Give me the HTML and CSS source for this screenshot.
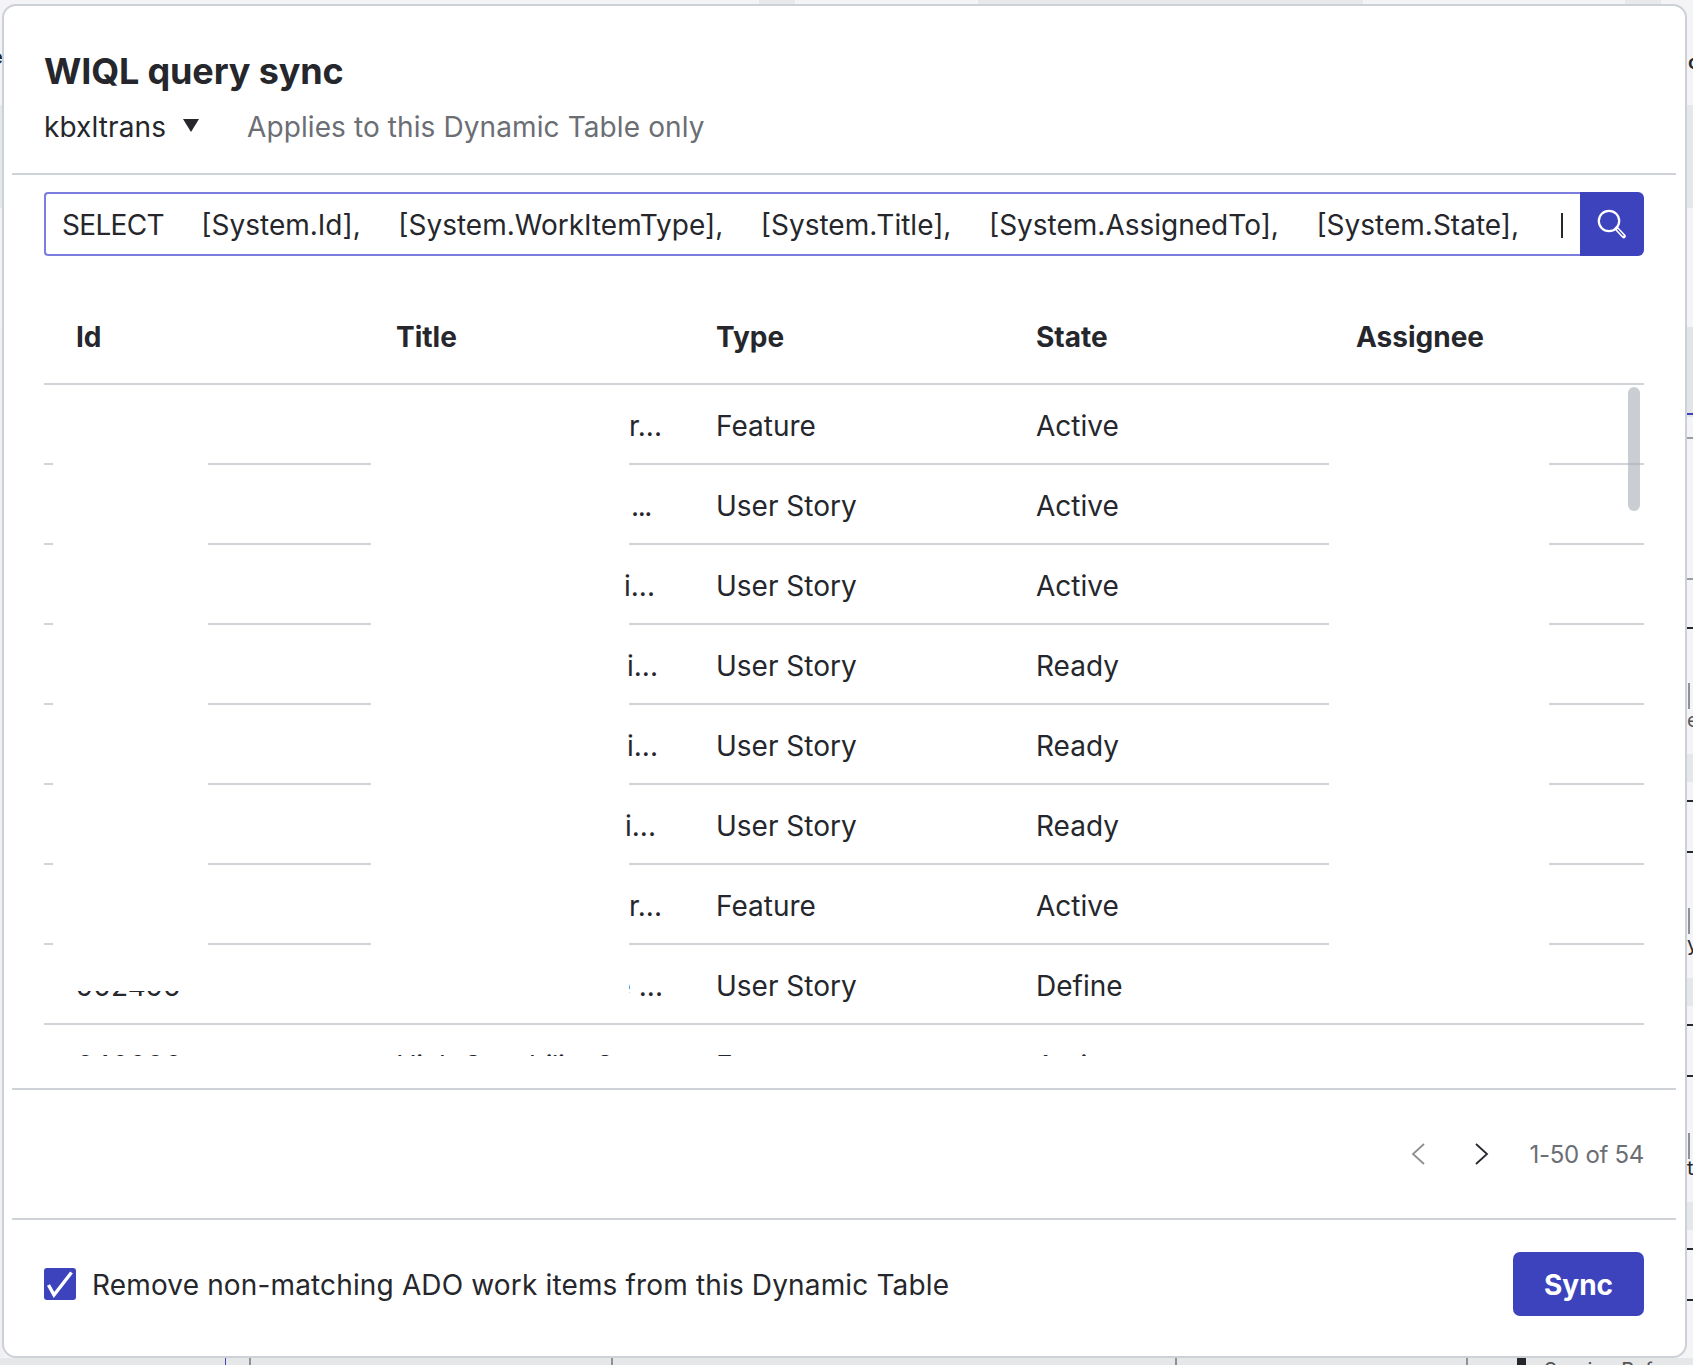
FILE: index.html
```html
<!DOCTYPE html>
<html lang="en">
<head>
<meta charset="utf-8">
<title>WIQL query sync</title>
<link rel="stylesheet" href="styles.css">
</head>
<body>
<div class="backdrop" aria-hidden="true">
  <i class="bd top-a"></i><i class="bd top-b"></i><i class="bd top-c"></i>
  <i class="bd right-band-a"></i><i class="bd right-band-b"></i>
  <i class="bd left-band-a"></i><i class="bd left-band-b"></i>
  <i class="bd tick t1"></i><i class="bd tick t2"></i><i class="bd tick t3"></i><i class="bd tick t4"></i><i class="bd tick t5"></i><i class="bd tick t6"></i><i class="bd tick t7"></i>
  <i class="bd blue-tick"></i><i class="bd grey-tick g1"></i><i class="bd grey-tick g2"></i>
  <i class="bd vbar v1"></i><i class="bd vbar v2"></i><i class="bd vbar v3"></i>
  <i class="bd chip c1"></i><i class="bd chip c2"></i><i class="bd chip c3"></i>
  <i class="bd bottom-band"></i>
  <i class="bd btick b1"></i><i class="bd btick b2"></i><i class="bd btick b3"></i><i class="bd btick b4"></i><i class="bd btick b5"></i><i class="bd btick b6"></i>
  <span class="bd-text bt">Service Ref</span>
  <span class="edge-letter l1">e</span>
  <span class="edge-letter l2">c</span>
  <span class="edge-letter l3">e</span>
  <span class="edge-letter l4">y</span>
  <span class="edge-letter l5">t</span>
</div>

<main class="modal">
  <header class="modal-head">
    <h1 class="modal-title">WIQL query sync</h1>
    <div class="modal-sub">
      <span class="project">kbxltrans</span>
      <svg class="caret-down" viewBox="0 0 16 13" width="16" height="13"><path d="M0 0h16L8 13z"/></svg>
      <span class="scope">Applies to this Dynamic Table only</span>
    </div>
  </header>

  <section class="modal-main">
    <div class="search">
      <div class="query"><span class="query-text"><span class="kw">SELECT</span>    [System.Id],    [System.WorkItemType],    [System.Title],    [System.AssignedTo],    [System.State],</span><span class="text-caret"></span></div>
      <button class="search-btn" aria-label="Search">
        <svg viewBox="0 0 32 32" width="32" height="32" fill="none" stroke="#fff">
          <circle cx="13" cy="13" r="10.2" stroke-width="2.2"/>
          <path d="M20.6 20.6l7.2 7.6" stroke-width="4.2" stroke-linecap="round"/>
          <path d="M21.6 21.6l5.4 5.7" stroke="#3d43bd" stroke-width="1.2" stroke-linecap="round"/>
        </svg>
      </button>
    </div>

    <div class="table">
      <div class="row head"><div>Id</div><div>Title</div><div>Type</div><div>State</div><div>Assignee</div></div>
      <div class="table-body">
        <div class="row"><div></div><div class="t over">r...</div><div>Feature</div><div>Active</div><div></div></div>
        <div class="row"><div></div><div class="t over end-33">...</div><div>User Story</div><div>Active</div><div></div></div>
        <div class="row"><div></div><div class="t over end-29">i...</div><div>User Story</div><div>Active</div><div></div></div>
        <div class="row"><div></div><div class="t over end-26">i...</div><div>User Story</div><div>Ready</div><div></div></div>
        <div class="row"><div></div><div class="t over end-26">i...</div><div>User Story</div><div>Ready</div><div></div></div>
        <div class="row"><div></div><div class="t over end-28">i...</div><div>User Story</div><div>Ready</div><div></div></div>
        <div class="row"><div></div><div class="t over">r...</div><div>Feature</div><div>Active</div><div></div></div>
        <div class="row"><div>902496</div><div class="t end-21">se ...</div><div>User Story</div><div>Define</div><div></div></div>
        <div class="row"><div>640096</div><div class="title-long">High Capability Sup</div><div>Feature</div><div>Active</div><div></div></div>
        <div class="mask m-id"></div>
        <div class="mask m-title"></div>
        <div class="mask m-assignee"></div>
        <div class="thumb"></div>
      </div>
    </div>
  </section>

  <section class="pager">
    <svg class="chev prev" viewBox="0 0 14 22" width="14" height="22" fill="none"><path d="M13 1L2 11l11 10" stroke-width="1.8"/></svg>
    <svg class="chev next" viewBox="0 0 14 22" width="14" height="22" fill="none"><path d="M1 1l11 10L1 21" stroke-width="1.8"/></svg>
    <span class="count">1-50 of 54</span>
  </section>

  <footer class="modal-foot">
    <label class="check">
      <span class="box"><svg viewBox="0 0 32 32" width="32" height="32" fill="none"><path d="M4.5 17l5.5 10L27.5 4.5" stroke="#fff" stroke-width="3.4"/></svg></span>
      <span class="check-label">Remove non-matching ADO work items from this Dynamic Table</span>
    </label>
    <button class="sync">Sync</button>
  </footer>
</main>
</body>
</html>
```

FILE: styles.css
```css
* { box-sizing: border-box; }
html, body { margin: 0; height: 100%; }
body {
  width: 1693px;
  height: 1365px;
  overflow: hidden;
  position: relative;
  background: #f4f4f6;
  font-family: Inter, "Noto Sans", sans-serif;
  color: #25272c;
}

/* page behind the dialog */
.backdrop { position: absolute; inset: 0; overflow: hidden; }
.bd { position: absolute; display: block; }
.top-a, .top-b, .top-c { top: 0; height: 5px; background: #e8e9eb; }
.top-a { left: 759px; width: 36px; }
.top-b { left: 978px; width: 385px; }
.top-c { left: 1625px; width: 36px; }
.right-band-a { left: 1685px; top: 105px; width: 8px; height: 103px; background: #e6e7e9; }
.right-band-b { left: 1685px; top: 327px; width: 8px; height: 90px; background: #e3e4e6; }
.left-band-a { left: 0; top: 105px; width: 4px; height: 103px; background: #e6e7e9; }
.left-band-b { left: 0; top: 327px; width: 4px; height: 1030px; background: #f0f0f2; }
.tick { left: 1687px; width: 6px; height: 2px; background: #25272c; }
.t1 { top: 627px; } .t2 { top: 800px; } .t3 { top: 851px; } .t4 { top: 1024px; } .t5 { top: 1075px; }
.t6 { top: 1248px; } .t7 { top: 1299px; }
.blue-tick { left: 1687px; top: 413px; width: 6px; height: 2px; background: #3d43bd; }
.grey-tick { left: 1687px; width: 6px; height: 2px; background: #9a9ca0; }
.g1 { top: 437px; } .g2 { top: 578px; }
.vbar { left: 1688px; width: 2px; height: 26px; background: #8f9195; }
.v1 { top: 683px; } .v2 { top: 908px; } .v3 { top: 1133px; }
.chip { left: 1687px; width: 6px; height: 28px; background: #e6e7e9; }
.c1 { top: 754px; } .c2 { top: 978px; } .c3 { top: 1202px; }
.bottom-band { left: 0; top: 1358px; width: 1693px; height: 7px; background: #e6e7e9; }
.btick { top: 1358px; width: 2px; height: 7px; background: #8f9195; }
.b1 { left: 225px; width: 1px; background: #3d43bd; }
.b2 { left: 249px; } .b3 { left: 611px; } .b4 { left: 1175px; } .b5 { left: 1466px; }
.b6 { left: 1517px; width: 9px; background: #25272c; }
.bd-text { position: absolute; left: 1544px; top: 1358px; font-size: 20px; line-height: 24px; height: 7px; overflow: hidden; color: #555; }
.edge-letter { position: absolute; font-size: 20px; line-height: 24px; color: #25272c; }
.l1 { left: -9px; top: 45px; font-weight: 600; }
.l2 { left: 1688px; top: 50px; font-weight: 600; }
.l3 { left: 1687px; top: 708px; color: #55575c; }
.l4 { left: 1687px; top: 932px; }
.l5 { left: 1687px; top: 1156px; }

/* dialog */
.modal {
  position: absolute;
  left: 2px;
  top: 4px;
  width: 1685px;
  height: 1354px;
  display: flex;
  flex-direction: column;
  padding: 0 9px 0 8px;
  background: #fff;
  border: 2px solid #ccd1d7;
  border-radius: 14px;
}
.modal-head {
  height: 169px;
  padding: 42px 32px 0;
  border-bottom: 2px solid #cfd3d8;
  flex: none;
}
.modal-title {
  margin: 0;
  font-size: 36px;
  line-height: 46px;
  font-weight: 650;
  letter-spacing: -.15px;
  color: #25272c;
}
.modal-sub {
  display: flex;
  align-items: center;
  margin-top: 13px;
  font-size: 28px;
  line-height: 40px;
}
.project { letter-spacing: .1px; }
.caret-down { margin: 0 0 4px 17px; fill: #25272c; }
.scope { margin-left: 48px; color: #6b6e74; letter-spacing: .1px; }

.modal-main { flex: none; height: 915px; padding: 17px 32px 0; border-bottom: 2px solid #cfd3d8; }

.search { display: flex; height: 64px; }
.query {
  flex: 1;
  min-width: 0;
  display: flex;
  align-items: center;
  justify-content: space-between;
  padding: 2px 17px 0 16px;
  border: 2px solid #7b7edc;
  border-right: 0;
  border-radius: 4px 0 0 4px;
  font-size: 28px;
}
.query-text { white-space: pre; word-spacing: 1.5px; }
.kw { letter-spacing: -.7px; }
.text-caret { width: 2px; height: 25px; background: #25272c; }
.search-btn {
  flex: none;
  width: 64px;
  display: flex;
  align-items: center;
  justify-content: center;
  padding: 0;
  border: 0;
  border-radius: 0 6px 6px 0;
  background: #3d43bd;
}

.table { margin-top: 33px; }
.row {
  display: grid;
  grid-template-columns: repeat(5, 320px);
  height: 80px;
  padding-top: 4px;
  align-items: center;
  border-bottom: 2px solid #d0d3d8;
  font-size: 28px;
}
.row > div { padding-left: 32px; white-space: nowrap; overflow: hidden; }
.row > .t { text-align: right; padding: 0 22px 0 0; }
.row > .over { position: relative; z-index: 1; }
.row > .end-33 { padding-right: 33px; letter-spacing: -1.4px; }
.row > .end-29 { padding-right: 29px; }
.row > .end-28 { padding-right: 28px; }
.row > .end-26 { padding-right: 26px; }
.row > .end-21 { padding-right: 21px; }
.row > .title-long { letter-spacing: -.6px; }
.row.head { height: 96px; font-weight: 650; font-size: 28px; padding-top: 2px; }
.table-body { position: relative; height: 671px; overflow: hidden; }
.mask { position: absolute; background: #fff; top: 0; }
.m-id { left: 9px; width: 155px; height: 606px; }
.m-title { left: 327px; width: 258px; height: 636px; }
.m-assignee { left: 1285px; width: 220px; height: 560px; }
.thumb { position: absolute; right: 4px; top: 2px; width: 12px; height: 124px; border-radius: 6px; background: rgba(170, 176, 184, .62); }

.pager { flex: none; height: 130px; display: flex; align-items: center; padding: 0 32px; border-bottom: 2px solid #cfd3d8; justify-content: flex-end; }
.chev { display: block; }
.prev { stroke: #8d8f93; }
.next { stroke: #25272c; margin-left: 50px; }
.count { margin-left: 41px; font-size: 24px; letter-spacing: -.3px; color: #6b6e74; }

.modal-foot { flex: 1; display: flex; align-items: center; justify-content: space-between; padding: 0 32px 8px; }
.check { display: flex; align-items: center; gap: 16px; font-size: 28px; }
.check-label { letter-spacing: .15px; padding-top: 2px; }
.box { width: 32px; height: 32px; border-radius: 3px; background: #3d43bd; }
.box svg { display: block; }
.sync {
  width: 131px;
  height: 64px;
  padding: 2px 0 0;
  border: 0;
  border-radius: 7px;
  background: #3d43bd;
  color: #fff;
  font: 650 28px Inter, sans-serif;
}
```
